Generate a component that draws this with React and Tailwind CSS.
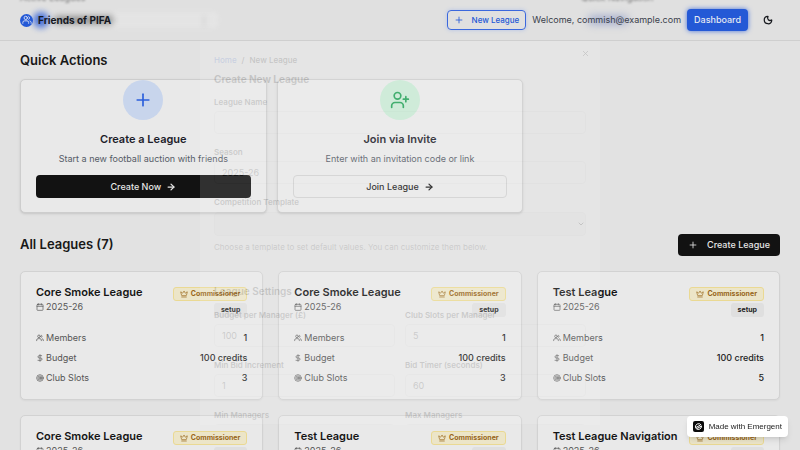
import React from "react";
import { Plus, ArrowRight, UserPlus, Moon, Crown, Calendar, DollarSign, Target, X, ChevronDown } from "lucide-react";

const leagues = [
  { name: "Core Smoke League", slots: 3 },
  { name: "Core Smoke League", slots: 3 },
  { name: "Test League", slots: 5 },
  { name: "Core Smoke League", slots: 3 },
  { name: "Test League", slots: 3 },
  { name: "Test League Navigation", slots: 3 },
];

function PeopleIcon({ className }) {
  return (
    <svg viewBox="0 0 24 24" className={className} fill="none" stroke="currentColor" strokeWidth="2" strokeLinecap="round" strokeLinejoin="round">
      <circle cx="9" cy="7" r="4" />
      <path d="M2 20v-2a4 4 0 0 1 4-4h6a4 4 0 0 1 4 4v2M16 3.500a4 4 0 0 1 0 7M22 20v-2a4 4 0 0 0-3-3.800" />
    </svg>
  );
}

function Header() {
  return (
    <header className="relative z-20 flex h-[41px] shrink-0 items-center justify-between border-b border-[#cfcfcf] bg-[#e0e0e0] px-5">
      <div aria-hidden="true" className="pointer-events-none absolute inset-0 overflow-hidden">
        <div className="absolute top-[12px] left-[33px] size-4 rounded-full bg-[#2a5bd8] opacity-80 blur-[3px]" />
        <div className="absolute top-[16px] left-[54px] h-2 w-[60px] rounded-full bg-[#333] opacity-45 blur-[3px]" />
        <div className="absolute top-[12px] left-[112px] h-4 w-[106px] rounded bg-white opacity-15 blur-[2px]" />
        <div className="absolute top-[15px] left-[202px] h-3 w-1 bg-[#888] opacity-10 blur-[2px]" />
        <div className="absolute top-[16px] left-[588px] h-2 w-10 rounded-full bg-[#5b70b5] opacity-50 blur-[4px]" />
        <span className="absolute top-[-8px] left-5 text-[9px] leading-3 text-[#777] blur-[1px]">Active Leagues</span>
        <span className="absolute top-[-8px] left-[581px] text-[9px] leading-3 text-[#777] blur-[1px]">Quick Navigation</span>
      </div>
      <a href="#home" className="relative flex items-center gap-[5px] text-[10px] font-bold text-[#15181f]">
        <span className="flex size-[13px] items-center justify-center rounded-full bg-[#2459d6] text-[#e8ecf6]">
          <PeopleIcon className="size-[10px]" />
        </span>
        Friends of PIFA
      </a>
      <nav className="relative flex items-center gap-[6px]">
        <button className="flex h-5 items-center gap-2 rounded border border-[#3b68dd] px-[6px] text-[8px] font-medium text-[#2459d6] shadow-[0_0_4px_#b4c3e6]">
          <Plus className="size-[10px]" />
          New League
        </button>
        <span className="text-[9px] text-[#3b414c]">Welcome, commish@example.com</span>
        <button className="h-[22px] rounded bg-[#2459d6] px-[7px] text-[9px] font-medium text-[#e6e9f2] shadow-[0_0_5px_#4a74dc]">Dashboard</button>
        <button aria-label="Toggle theme" className="mr-[2px] ml-1 flex size-5 items-center justify-center text-[#17191e]">
          <Moon className="size-[10px]" strokeWidth={3} />
        </button>
      </nav>
    </header>
  );
}

function ActionCard({ icon, tone, title, text, action }) {
  return (
    <article className="flex flex-col items-center rounded-[5px] border border-[#cdcdcd] bg-[#e9e9e9] px-[15px] pb-[14px] shadow-sm">
      <span className={"flex size-10 items-center justify-center rounded-full " + tone}>{icon}</span>
      <h3 className="mt-[10px] text-[11px] leading-[18px] font-semibold text-[#1c2029]">{title}</h3>
      <p className="mt-1 mb-[9px] text-[9px] leading-[14px] text-[#555b66]">{text}</p>
      {action}
    </article>
  );
}

function Row({ icon, label, value }) {
  return (
    <div className="flex h-5 items-center justify-between">
      <dt className="flex items-center gap-[2px] text-[#555]">{icon}{label}</dt>
      <dd className="font-medium text-[#222]">{value}</dd>
    </div>
  );
}

function LeagueCard({ league }) {
  return (
    <article className="h-[129px] rounded-[5px] border border-[#d2d2d2] bg-[#e9e9e9] px-[15px] pt-[13px] text-[9px] shadow-xs">
      <div className="flex justify-between">
        <div>
          <h3 className="text-[11px] leading-[15px] font-semibold whitespace-nowrap text-[#151515]">{league.name}</h3>
          <p className="flex items-center gap-[2px] leading-[14px] text-[#555]"><Calendar className="size-2" />2025-26</p>
        </div>
        <div className="flex flex-col items-end gap-[2px] pt-[2px]">
          <span className="flex h-[14px] items-center gap-[3px] rounded-[3px] border border-[#ead993] bg-[#ece5c8] px-[6px] text-[7px] font-bold text-[#98661a]">
            <Crown className="size-2" />Commissioner
          </span>
          <span className="flex h-[14px] items-center rounded-[3px] bg-[#dfdfdf] px-[7px] text-[7px] font-bold text-[#222]">setup</span>
        </div>
      </div>
      <dl className="mt-[11px]">
        <Row icon={<PeopleIcon className="size-2" />} label="Members" value="1" />
        <Row icon={<DollarSign className="size-2" />} label="Budget" value="100 credits" />
        <Row icon={<Target className="size-2" />} label="Club Slots" value={league.slots} />
      </dl>
    </article>
  );
}

function Field({ id, label, value }) {
  return (
    <div className="h-[50px]">
      <label htmlFor={id} className="block h-[15px] text-[8px] leading-[12px] font-semibold">{label}</label>
      <input id={id} defaultValue={value} className="h-[23px] w-full rounded border border-[#ddd] bg-white px-[7px] text-[9px]" />
    </div>
  );
}

function CreateDialog() {
  return (
    <div className="pointer-events-none fixed inset-0 z-10 flex items-center justify-center">
      <section role="dialog" aria-label="Create New League" className="relative h-[400px] w-1/2 overflow-hidden bg-white px-[14px] pt-[29px] text-[8px] text-black opacity-13">
        <button aria-label="Close" className="absolute top-6 right-[10px]"><X className="size-[9px]" /></button>
        <nav className="flex h-3 items-center gap-[5px] font-medium">
          <a href="#home" className="text-[#2459d6]">Home</a><span>/</span><span>New League</span>
        </nav>
        <h2 className="mt-[5px] text-[10px] leading-4 font-bold">Create New League</h2>
        <div className="mt-[9px]">
          <Field id="name" label="League Name" value="" />
          <Field id="season" label="Season" value="2025-26" />
          <label htmlFor="template" className="block h-[16px] leading-[12px] font-semibold">Competition Template</label>
          <div className="relative">
            <select id="template" className="block h-6 w-full appearance-none rounded border border-[#ddd] bg-[#eee] px-2"><option></option></select>
            <ChevronDown className="absolute top-2 right-px size-2" strokeWidth={3} />
          </div>
          <p className="mt-1 h-[14px] leading-[14px] text-[#333]">Choose a template to set default values. You can customize them below.</p>
        </div>
        <h3 className="mt-[29px] text-[10px] leading-4 font-semibold">League Settings</h3>
        <div className="mt-[10px] grid grid-cols-2 gap-x-[10px]">
          <Field id="budget" label="Budget per Manager (£)" value="100" />
          <Field id="slots" label="Club Slots per Manager" value="5" />
          <Field id="bid" label="Min Bid Increment" value="1" />
          <Field id="timer" label="Bid Timer (seconds)" value="60" />
          <Field id="min" label="Min Managers" value="2" />
          <Field id="max" label="Max Managers" value="8" />
        </div>
      </section>
    </div>
  );
}

export default function App() {
  return (
    <div className="flex h-screen flex-col overflow-hidden bg-[#e2e2e2] font-['Inter',sans-serif] text-[#181818]">
      <Header />
      <main className="px-5 pt-[9px]">
        <h2 className="text-[13px] leading-5 font-semibold">Quick Actions</h2>
        <section className="mt-[9px] grid grid-cols-3 gap-[10px]">
          <ActionCard
            icon={<Plus className="size-5 text-[#2b5fdb]" />}
            tone="bg-[#c8d5ec]"
            title="Create a League"
            text="Start a new football auction with friends"
            action={<button className="flex h-[23px] w-full items-center justify-center gap-[5px] rounded bg-[#121212] text-[9px] font-medium text-[#e6e6e6]">Create Now<ArrowRight className="size-[10px]" strokeWidth={3} /></button>}
          />
          <ActionCard
            icon={<UserPlus className="size-5 text-[#27a35a]" />}
            tone="bg-[#c8e8d4]"
            title="Join via Invite"
            text="Enter with an invitation code or link"
            action={<button className="flex h-[23px] w-full items-center justify-center gap-[5px] rounded border border-[#d0d0d0] text-[9px] font-medium text-[#181818]">Join League<ArrowRight className="size-[10px]" strokeWidth={3} /></button>}
          />
        </section>
        <div className="mt-[21px] mb-[15px] flex items-center justify-between">
          <h2 className="text-[13px] font-semibold">All Leagues (7)</h2>
          <button className="flex h-[22px] items-center gap-[9px] rounded bg-[#121212] px-[10px] text-[9px] font-medium text-[#e6e6e6]"><Plus className="size-[10px]" />Create League</button>
        </div>
        <section className="grid grid-cols-3 gap-[15px]">
          {leagues.map((l, i) => <LeagueCard key={i} league={l} />)}
        </section>
      </main>
      <CreateDialog />
      <a href="#emergent" className="fixed right-3 bottom-[13px] z-30 flex h-[21px] items-center gap-[5px] rounded bg-white px-[6px] font-['Liberation_Sans',sans-serif] text-[8px] text-[#222] shadow-md">
        <svg viewBox="0 0 22 22" className="size-[11px]" fill="none" stroke="white" strokeWidth="2">
          <rect width="22" height="22" rx="4" fill="#0b0b0b" stroke="none" />
          <path d="M16.500 8A6.500 6.500 0 0 0 5 13.500L15 8M5.500 14.500A6.500 6.500 0 0 0 17 10L8 15" />
        </svg>
        Made with Emergent
      </a>
    </div>
  );
}
